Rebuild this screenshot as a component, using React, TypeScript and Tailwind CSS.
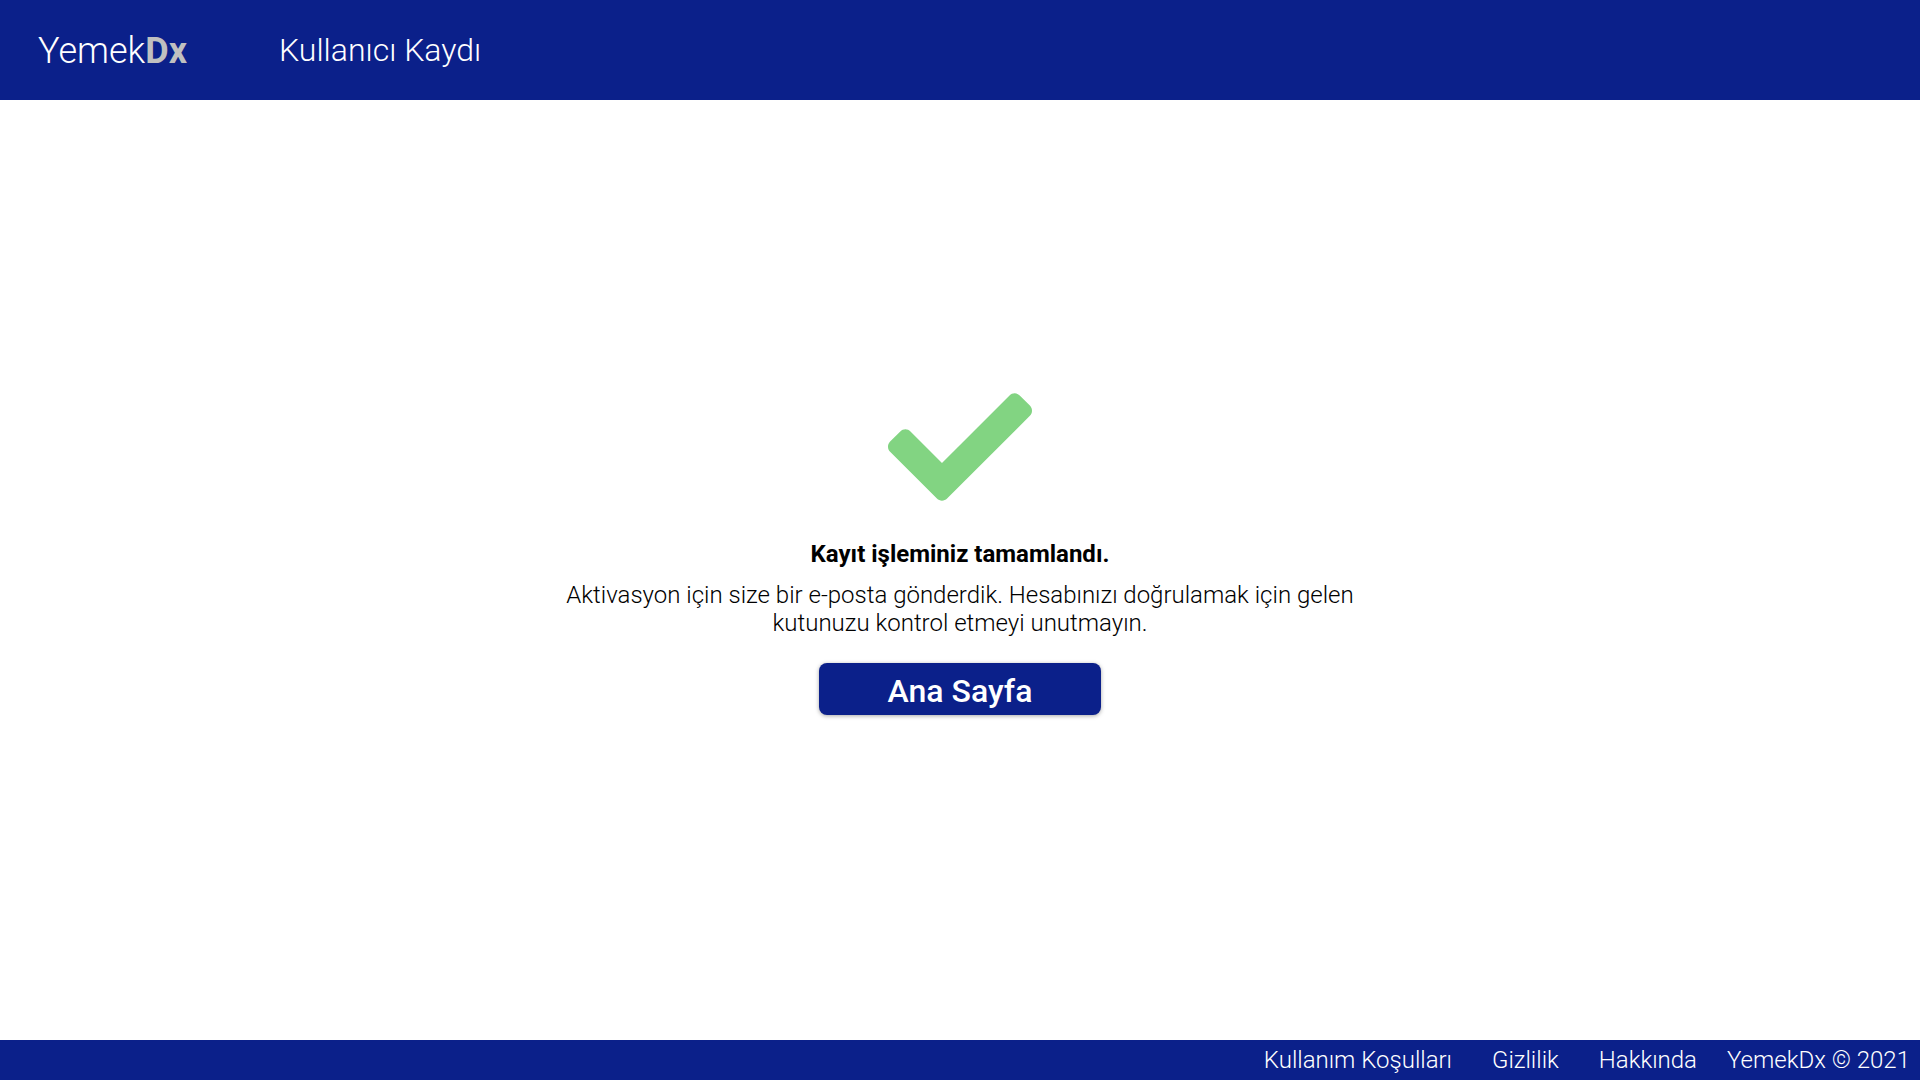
import React from "react";
import { FaCheck } from "react-icons/fa";

export default function App() {
  return (
    <div className="flex min-h-screen flex-col bg-white font-['Roboto',sans-serif] text-black">
      <header className="flex h-[100px] items-center bg-[#0b208a] pl-[38px] font-light text-white">
        <a href="#" className="w-[241px] pt-0.5 text-4xl">
          Yemek<span className="font-bold text-[#c0c0c0]">Dx</span>
        </a>
        <h1 className="text-[32px]">Kullanıcı Kaydı</h1>
      </header>
      <main className="flex flex-1 flex-col items-center justify-center pb-[50px] text-center">
        <FaCheck className="h-36 w-36 text-[#82d482]" aria-hidden="true" />
        <h2 className="mt-[21px] text-2xl font-bold leading-7">Kayıt işleminiz tamamlandı.</h2>
        <p className="mt-[13px] max-w-[800px] text-2xl font-light leading-7">
          Aktivasyon için size bir e-posta gönderdik. Hesabınızı doğrulamak için gelen kutunuzu kontrol etmeyi unutmayın.
        </p>
        <button className="mt-[26px] h-[52px] w-[282px] rounded-lg bg-[#0b208a] pt-1 text-[32px] font-medium text-white shadow-[0_1px_4px_rgba(0,0,0,0.35)]">
          Ana Sayfa
        </button>
      </main>
      <footer className="flex h-10 items-center justify-end bg-[#0b208a] pr-[10px] text-2xl font-light text-white">
        <nav className="mr-[30px] flex gap-10">
          <a href="#">Kullanım Koşulları</a>
          <a href="#">Gizlilik</a>
          <a href="#">Hakkında</a>
        </nav>
        <span>YemekDx © 2021</span>
      </footer>
    </div>
  );
}
